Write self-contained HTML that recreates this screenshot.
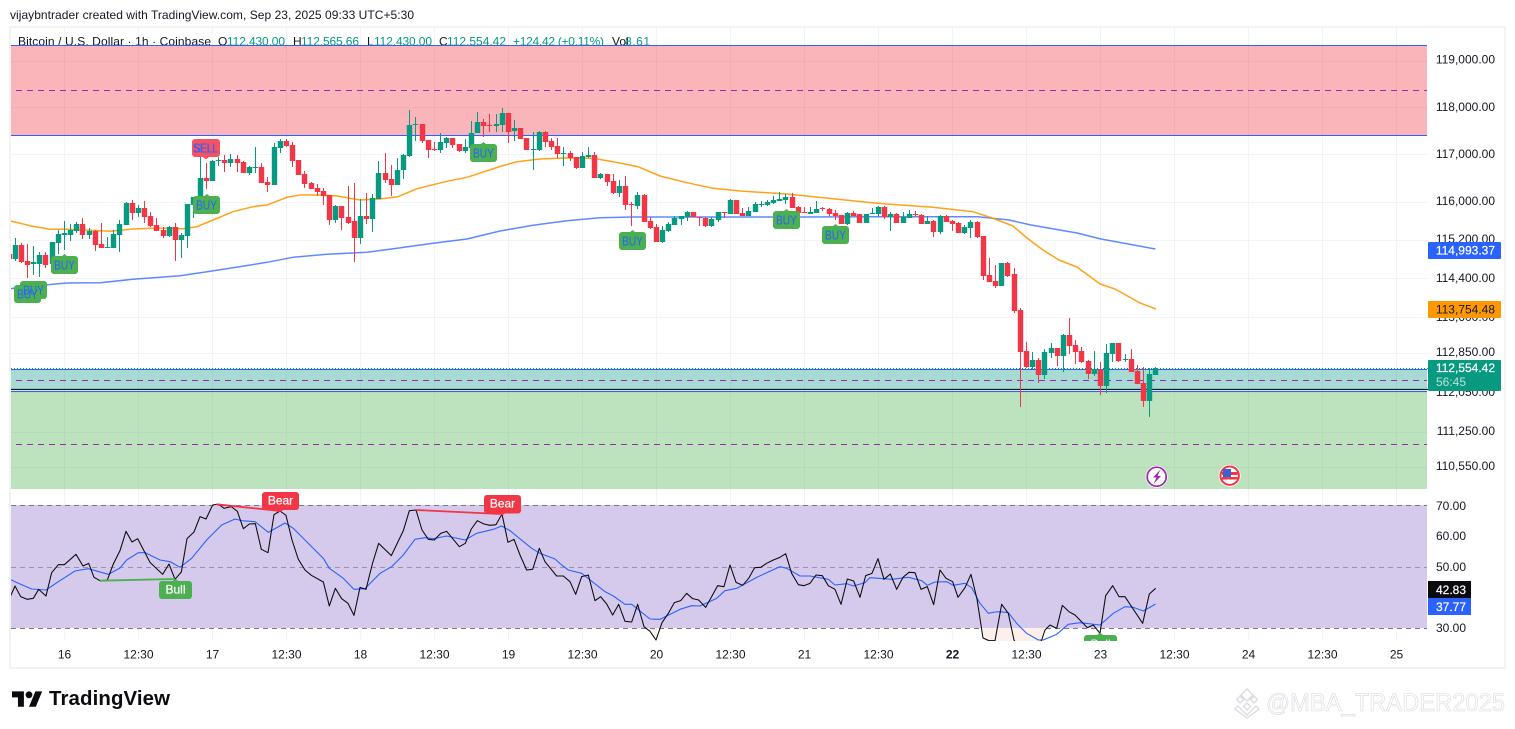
<!DOCTYPE html>
<html><head><meta charset="utf-8"><title>BTCUSD chart</title>
<style>
html,body{margin:0;padding:0;background:#fff;width:1515px;height:729px;overflow:hidden}
svg{display:block;font-family:"Liberation Sans",sans-serif;font-size:12px}
.ax text{fill:#131722}
</style></head><body>
<svg width="1515" height="729" viewBox="0 0 1515 729" xmlns="http://www.w3.org/2000/svg">
<defs>
<clipPath id="legend"><rect x="11" y="27" width="1416" height="18"/></clipPath>
<clipPath id="main"><rect x="11" y="27" width="1416" height="462"/></clipPath>
<clipPath id="rsi"><rect x="11" y="490" width="1416" height="151"/></clipPath>
</defs>
<text x="10" y="19" fill="#131722" textLength="404">vijaybntrader created with TradingView.com, Sep 23, 2025 09:33 UTC+5:30</text>
<rect x="10" y="27" width="1495" height="641" fill="#fff" stroke="#f3f3f3" stroke-width="2"/>

<!-- grid -->
<path stroke="#f2f3f5" stroke-width="1" fill="none" d="M11 61.5H1427M11 107.5H1427M11 154.5H1427M11 202.5H1427M11 240.5H1427M11 278.5H1427M11 317.5H1427M11 353.5H1427M11 392.5H1427M11 432.5H1427M11 467.5H1427
M64.5 28V641M138.5 28V641M212.5 28V641M286.5 28V641M360.5 28V641M434.5 28V641M508.5 28V641M582.5 28V641M656.5 28V641M730.5 28V641M804.5 28V641M878.5 28V641M952.5 28V641M1026.5 28V641M1100.5 28V641M1174.5 28V641M1248.5 28V641M1322.5 28V641M1396.5 28V641"/>

<!-- legend -->
<g clip-path="url(#legend)" fill="#089981">
<text x="18" y="45.500" fill="#131722" textLength="193">Bitcoin / U.S. Dollar · 1h · Coinbase</text>
<text x="218" y="45.500" fill="#131722">O</text><text x="227" y="45.500" textLength="58">112,430.00</text>
<text x="293" y="45.500" fill="#131722">H</text><text x="301" y="45.500" textLength="58">112,565.66</text>
<text x="367" y="45.500" fill="#131722">L</text><text x="374" y="45.500" textLength="58">112,430.00</text>
<text x="439" y="45.500" fill="#131722">C</text><text x="447" y="45.500" textLength="59">112,554.42</text>
<text x="513" y="45.500" textLength="91">+124.42 (+0.11%)</text>
<text x="612" y="45.500" fill="#131722">Vol</text><text x="625" y="45.500" textLength="25">8.61</text>
</g>

<!-- zones -->
<rect x="11" y="45" width="1416" height="90" fill="#f23645" fill-opacity=".37"/>
<rect x="11" y="369" width="1416" height="21" fill="#089981" fill-opacity=".36"/>
<rect x="11" y="391" width="1416" height="98" fill="#4caf50" fill-opacity=".37"/>
<path stroke="#2962ff" stroke-width="1" fill="none" d="M11 45.5H1427M11 135.5H1427M11 391.5H1427M11 369.5H1427"/>
<path stroke="#089981" stroke-width="1" stroke-dasharray="1 2" fill="none" d="M11 368.5H1428"/>
<path stroke="#9c27b0" stroke-width="1" stroke-dasharray="6 5" fill="none" d="M16 90.5H1427M16 380.5H1427M16 444.5H1427"/>
<path stroke="#0a1a1a" stroke-width="1.2" fill="none" d="M11 389.5H1428"/>

<!-- moving averages -->
<g clip-path="url(#main)" fill="none" stroke-linejoin="round">
<polyline stroke="#2962ff" stroke-opacity=".75" stroke-width="1.500" points="10.7,288.7 33,286 67,283 100,282.7 133,279.3 180,275.7 207,271.7 233,267.7 267,262.3 293,257.3 327,254.3 367,252.3 397,248.3 433,243.3 467,239 500,231 533,225.3 567,220.7 600,217.7 633,217 667,217 733,217 800,217 867,216.7 933,216.7 978,216.7 1009,220 1031,225 1077,233 1101,239 1155.4,249"/>
<polyline stroke="#ff9800" stroke-opacity=".9" stroke-width="1.500" points="10.7,221 30,225.7 50,229.3 66.7,229.3 86.7,230 110,231.3 133,229 156.7,228 183,228.7 196.7,226.7 213,220 233,211.7 253,206.7 268,204.7 287,197.3 300,195 320,195 337,196 360,200 380,199 398,196.7 417,188.7 447,181.3 467,177.3 500,166.5 517,161.7 540,159 563,158 593,158.3 613,161.7 638,166.7 660,176 687,182.7 713,188.3 740,191 787,194 833,198.7 877,203.3 933,207.3 973,211.7 995,219 1013,226 1027,238 1043,250 1059,260 1077,267 1100,284 1115,289 1140,303 1156,309"/>
</g>

<!-- candles -->
<g clip-path="url(#main)" fill="none">
<path stroke="#089981" stroke-width="1" d="M15.5 238V261M33.5 246V275M39.5 252V277M52.5 242V265M58.5 230V254M64.5 221V250M70.5 224V241M76.5 222V233M89.5 228V239M107.5 237V248M113.5 230V248M119.5 220V252M126.5 202V225M138.5 205V217M169.5 226V237M181.5 233V258M187.5 204V248M193.5 197V218M200.5 157V197M212.5 160V181M218.5 157V166M230.5 154V167M249.5 166V175M255.5 147V173M274.5 143V185M280.5 139V153M335.5 205V223M360.5 199V244M372.5 194V232M378.5 161V199M397.5 158V185M403.5 154V179M409.5 110V157M415.5 117V141M440.5 133V153M446.5 137V148M465.5 139V153M471.5 121V148M477.5 112V133M496.5 114V132M502.5 108V132M514.5 120V141M533.5 132V170M539.5 131V151M563.5 147V166M582.5 152V168M588.5 147V158M600.5 173V179M619.5 180V197M637.5 192V209M662.5 226V243M668.5 222V232M674.5 216V225M681.5 216V225M687.5 211V221M711.5 217V227M718.5 212V222M730.5 199V214M748.5 207V216M755.5 202V212M761.5 201V207M767.5 200V206M773.5 196V204M779.5 192V201M785.5 194V204M810.5 207V214M816.5 201V213M847.5 212V225M866.5 214V223M872.5 208V214M878.5 206V216M890.5 212V231M903.5 212V223M909.5 210V218M927.5 216V224M940.5 215V234M964.5 225V234M970.5 220V238M1001.5 263V286M1032.5 352V369M1044.5 349V379M1051.5 343V358M1063.5 334V372M1094.5 351V376M1106.5 344V393M1112.5 343V362M1125.5 354V362M1149.5 368V417M1155.5 367V375"/>
<path stroke="#089981" stroke-width="5.400" d="M15.5 245V259M33.5 262V264M39.5 255V264M52.5 242V264M58.5 234V243M64.5 233V235M70.5 230V235M76.5 224V231M89.5 231V235M107.5 247V248M113.5 234V248M119.5 224V235M126.5 203V225M138.5 208V213M169.5 227V236M181.5 235V240M187.5 204V236M193.5 197V205M200.5 178V197M212.5 161V181M218.5 160V161M230.5 159V163M249.5 167V173M255.5 167V168M274.5 147V185M280.5 141V148M335.5 206V220M360.5 216V238M372.5 198V219M378.5 173V199M397.5 170V185M403.5 155V170M409.5 125V156M415.5 124V125M440.5 142V150M446.5 138V143M465.5 147V151M471.5 133V148M477.5 122V133M496.5 124V126M502.5 113V125M514.5 128V131M533.5 149V150M539.5 132V150M563.5 153V154M582.5 156V168M588.5 155V157M600.5 174V178M619.5 186V193M637.5 195V206M662.5 230V242M668.5 224V231M674.5 218V225M681.5 216V219M687.5 212V217M711.5 219V226M718.5 212V220M730.5 200V214M748.5 211V216M755.5 204V212M761.5 204V205M767.5 202V205M773.5 200V203M779.5 199V201M785.5 197V200M810.5 212V214M816.5 209V213M847.5 213V224M866.5 214V223M872.5 213V214M878.5 207V214M890.5 214V217M903.5 217V223M909.5 214V218M927.5 221V224M940.5 216V232M964.5 227V233M970.5 222V228M1001.5 263V286M1032.5 360V367M1044.5 352V375M1051.5 348V353M1063.5 335V356M1094.5 369V374M1106.5 353V386M1112.5 343V354M1125.5 359V360M1149.5 374V401M1155.5 368V375"/>
<path stroke="#f23645" stroke-width="1" d="M21.5 243V263M27.5 244V278M45.5 252V268M82.5 218V239M95.5 230V251M101.5 223V248M132.5 200V220M144.5 201V223M150.5 212V227M156.5 218V231M163.5 227V238M175.5 223V261M206.5 163V189M224.5 155V172M237.5 155V172M243.5 161V173M261.5 163V183M267.5 177V192M286.5 139V147M292.5 142V167M298.5 160V175M304.5 171V188M311.5 182V189M317.5 184V196M323.5 188V205M329.5 195V225M341.5 206V230M348.5 186V224M354.5 183V262M366.5 193V224M385.5 153V183M391.5 165V196M422.5 124V143M428.5 140V158M434.5 142V151M452.5 138V148M459.5 144V152M483.5 119V137M489.5 114V132M508.5 113V143M520.5 128V139M526.5 138V150M545.5 131V147M551.5 138V150M557.5 138V158M570.5 151V161M576.5 157V169M594.5 152V178M607.5 174V186M613.5 174V194M625.5 176V210M631.5 202V226M644.5 194V222M650.5 217V229M656.5 224V242M693.5 212V217M699.5 217V226M705.5 217V227M724.5 212V218M736.5 200V214M742.5 208V216M792.5 193V208M798.5 206V213M804.5 207V213M822.5 207V211M829.5 208V216M835.5 210V220M841.5 215V224M853.5 211V216M859.5 214V223M884.5 206V219M896.5 213V223M915.5 211V216M921.5 214V224M933.5 220V237M946.5 215V222M952.5 220V231M958.5 222V233M977.5 221V238M983.5 236V280M989.5 258V282M995.5 265V288M1007.5 262V277M1014.5 268V313M1020.5 308V407M1026.5 342V368M1038.5 358V383M1057.5 348V366M1069.5 318V354M1075.5 340V364M1081.5 347V363M1088.5 360V379M1100.5 362V395M1118.5 343V362M1131.5 349V372M1137.5 365V384M1143.5 367V407"/>
<path stroke="#f23645" stroke-width="5.400" d="M9.5 254V259M21.5 245V262M27.5 261V265M45.5 255V265M82.5 224V235M95.5 231V245M101.5 244V248M132.5 203V213M144.5 208V217M150.5 216V226M156.5 225V231M163.5 230V236M175.5 227V240M206.5 178V181M224.5 160V163M237.5 159V163M243.5 162V173M261.5 167V183M267.5 182V185M286.5 141V146M292.5 145V161M298.5 160V175M304.5 174V184M311.5 183V189M317.5 188V192M323.5 191V196M329.5 195V220M341.5 206V218M348.5 217V223M354.5 221V238M366.5 216V219M385.5 173V180M391.5 179V185M422.5 124V141M428.5 140V150M434.5 149V150M452.5 138V145M459.5 144V151M483.5 122V126M489.5 125V126M508.5 113V132M520.5 128V139M526.5 138V150M545.5 132V142M551.5 141V147M557.5 146V154M570.5 153V158M576.5 157V168M594.5 155V178M607.5 174V182M613.5 181V193M625.5 186V205M631.5 204V205M644.5 195V222M650.5 221V228M656.5 227V242M693.5 212V217M699.5 217V218M705.5 218V226M724.5 212V213M736.5 200V214M742.5 213V216M792.5 197V208M798.5 207V213M804.5 212V213M822.5 208V209M829.5 209V214M835.5 213V216M841.5 215V224M853.5 213V216M859.5 214V223M884.5 207V217M896.5 214V223M915.5 214V215M921.5 215V224M933.5 221V232M946.5 216V222M952.5 221V224M958.5 223V233M977.5 222V237M983.5 236V276M989.5 275V282M995.5 281V286M1007.5 263V276M1014.5 274V311M1020.5 310V352M1026.5 351V367M1038.5 360V375M1057.5 348V356M1069.5 335V346M1075.5 345V352M1081.5 351V362M1088.5 361V374M1100.5 370V386M1118.5 343V361M1131.5 359V372M1137.5 371V384M1143.5 383V401"/>
</g>

<!-- BUY / SELL labels -->
<g font-size="12.500" text-anchor="middle">
<g fill="#4caf50">
<rect x="14" y="285" width="27" height="18" rx="3"/>
<rect x="20" y="281" width="27" height="18" rx="3"/>
<rect x="51" y="256" width="27" height="18" rx="3"/>
<rect x="193" y="196" width="27" height="18" rx="3"/>
<rect x="470" y="144" width="27" height="18" rx="3"/>
<rect x="619" y="232" width="27" height="18" rx="3"/>
<rect x="773" y="211" width="27" height="18" rx="3"/>
<rect x="822" y="226" width="27" height="18" rx="3"/>
<path d="M204.500 196l2.500-2 2.500 2zM481 144l2.500-2 2.500 2zM784 211l2.500-2 2.500 2zM833 226l2.500-2 2.500 2zM630 232l2.500-2 2.500 2zM62 256l2.500-2 2.500 2z"/>
</g>
<rect x="192" y="139" width="28" height="18" rx="3" fill="#f7525f"/>
<path d="M203 157l3 2.500 3-2.500z" fill="#f7525f"/>
<g fill="#2962ff">
<text x="27.500" y="298.500" textLength="21" lengthAdjust="spacingAndGlyphs">BUY</text>
<text x="33.500" y="294.500" textLength="21" lengthAdjust="spacingAndGlyphs">BUY</text>
<text x="64.500" y="269.500" textLength="21" lengthAdjust="spacingAndGlyphs">BUY</text>
<text x="206.500" y="209.500" textLength="21" lengthAdjust="spacingAndGlyphs">BUY</text>
<text x="483.500" y="157.500" textLength="21" lengthAdjust="spacingAndGlyphs">BUY</text>
<text x="632.500" y="245.500" textLength="21" lengthAdjust="spacingAndGlyphs">BUY</text>
<text x="786.500" y="224.500" textLength="21" lengthAdjust="spacingAndGlyphs">BUY</text>
<text x="835.500" y="239.500" textLength="21" lengthAdjust="spacingAndGlyphs">BUY</text>
<text x="205.500" y="152.500" textLength="25" lengthAdjust="spacingAndGlyphs">SELL</text>
<text x="206" y="152.500" textLength="24" lengthAdjust="spacingAndGlyphs">SELL</text>
</g>
</g>

<!-- event icons -->
<circle cx="1156.700" cy="476.700" r="11" fill="#fff"/>
<circle cx="1156.700" cy="476.700" r="9.500" fill="#fff" stroke="#9c27b0" stroke-width="1.700"/>
<path d="M1160.500 469.500l-7.500 8h3.500l-3 6.500 7.500-8h-3.500z" fill="#9c27b0"/>
<circle cx="1229.700" cy="475.700" r="11" fill="#fff"/>
<circle cx="1229.700" cy="475.700" r="9.200" fill="#fff" stroke="#f23645" stroke-width="2"/>
<rect x="1222" y="472" width="15.500" height="3" fill="#f23645"/>
<rect x="1222" y="477" width="15.500" height="2.500" fill="#f23645"/>
<rect x="1223" y="469" width="8" height="8" fill="#3a62d8"/>

<!-- RSI -->
<rect x="11" y="505" width="1416" height="123" fill="#d5caec"/>
<path stroke="#787b86" stroke-width="1" stroke-dasharray="5 4" fill="none" d="M11 505.500H1427M11 628.500H1427"/>
<path stroke="#9b90ae" stroke-width="1" stroke-dasharray="5 4" fill="none" d="M11 567.500H1427"/>
<g clip-path="url(#rsi)">
<path fill="#fdf0ea" d="M983 628h34l3 13h-35zM1014 628h30l-3 13h-24zM652 629l6 0-2.500 8z"/>
<g transform="translate(0 490) scale(.33333)" fill="none" stroke-linejoin="round">
<polyline stroke="#2962ff" stroke-width="3.300" points="30,268 60,282 95,297 138,300 175,275 225,243 265,236 325,253 360,234 380,210 415,188 435,188 480,210 510,215 540,232 575,205 620,150 665,105 705,87 725,92 765,95 805,127 855,99 880,115 970,205 988,235 1030,265 1062,298 1095,296 1140,250 1175,230 1210,195 1245,148 1275,143 1300,146 1340,138 1395,150 1430,130 1480,118 1505,108 1530,122 1595,175 1620,190 1665,207 1685,225 1705,240 1745,250 1815,305 1840,318 1875,343 1895,343 1950,387 1980,388 2040,358 2075,347 2100,348 2150,325 2175,302 2210,295 2270,262 2340,230 2360,235 2400,258 2430,258 2485,268 2505,285 2540,281 2560,288 2595,278 2610,263 2675,268 2725,262 2765,272 2782,286 2805,276 2840,275 2860,286 2895,280 2915,293 2940,340 2965,370 2985,366 3000,365 3025,368 3050,400 3080,430 3115,450 3130,450 3170,433 3205,403 3240,398 3300,405 3340,370 3375,350 3400,352 3430,363 3467,342"/>
<polyline stroke="#0b0b0f" stroke-width="3.200" points="30,322 45,288 62,320 82,328 100,325 116,298 138,318 155,248 175,224 193,224 228,193 249,228 266,220 282,262 300,272 322,270 340,222 360,182 378,124 396,156 413,146 450,217 488,253 507,222 525,268 544,246 561,146 582,126 600,80 618,87 638,45 655,42 672,55 694,50 712,64 730,116 748,102 766,101 784,178 804,188 822,74 840,63 858,76 876,150 895,208 915,240 934,256 970,276 988,348 1006,295 1025,326 1044,340 1062,376 1080,292 1098,298 1117,222 1136,160 1174,197 1210,122 1228,62 1248,60 1266,120 1285,148 1303,150 1322,130 1340,124 1378,170 1396,160 1414,117 1432,92 1452,102 1470,106 1488,104 1506,72 1524,157 1542,148 1560,195 1580,240 1598,238 1618,175 1635,215 1670,258 1690,258 1710,275 1727,313 1745,260 1765,255 1785,332 1802,320 1820,342 1838,375 1856,343 1875,394 1895,396 1913,343 1932,410 1950,424 1968,450 1986,398 2005,370 2023,338 2042,332 2060,310 2078,326 2096,330 2117,352 2135,320 2153,287 2172,290 2190,225 2208,277 2228,286 2246,265 2264,233 2282,232 2300,220 2320,210 2338,203 2357,191 2375,250 2395,284 2412,287 2430,280 2448,255 2467,257 2485,287 2505,298 2523,343 2542,267 2561,273 2580,322 2597,257 2616,250 2634,206 2652,268 2671,252 2690,298 2709,262 2727,247 2745,248 2763,298 2782,290 2801,344 2820,240 2838,265 2858,275 2874,322 2895,293 2913,253 2931,327 2949,444 2967,452 2985,452 3005,343 3025,370 3042,450 3060,480 3110,480 3125,450 3135,420 3150,405 3170,415 3187,346 3207,365 3225,375 3262,413 3280,405 3300,430 3317,317 3338,287 3357,320 3375,320 3428,400 3448,312 3467,295"/>
<path stroke="#f23645" stroke-width="5.500" d="M650 43L840 63M1248 60L1500 72"/>
<path stroke="#4caf50" stroke-width="5.500" d="M300 272L525 267"/>
</g>
<rect x="1084" y="635" width="33" height="18" rx="3" fill="#4caf50"/>
<path d="M1097 635l3-2.500 3 2.500z" fill="#4caf50"/>
<text x="1100.500" y="648" font-size="12" text-anchor="middle" fill="#fff">Bull</text>
</g>
<g font-size="12" text-anchor="middle" fill="#fff">
<rect x="262" y="492" width="37" height="18" rx="3" fill="#f23645"/>
<path d="M277 510l3 2 3-2z" fill="#f23645"/>
<text x="280.500" y="504.500" stroke="#fff" stroke-width=".2">Bear</text>
<rect x="484" y="495" width="37" height="18.500" rx="3" fill="#f23645"/>
<path d="M499 513.500l3 2 3-2z" fill="#f23645"/>
<text x="502.500" y="507.500" stroke="#fff" stroke-width=".2">Bear</text>
<rect x="159" y="581" width="33" height="18" rx="3" fill="#4caf50"/>
<path d="M172.500 581l3-2 3 2z" fill="#4caf50"/>
<text x="175.500" y="593.500" stroke="#fff" stroke-width=".2">Bull</text>
</g>

<!-- price axis -->
<g class="ax" text-anchor="end">
<text x="1495" y="63.500">119,000.00</text>
<text x="1495" y="111">118,000.00</text>
<text x="1495" y="158">117,000.00</text>
<text x="1495" y="205">116,000.00</text>
<text x="1495" y="243">115,200.00</text>
<text x="1495" y="282">114,400.00</text>
<text x="1495" y="321">113,600.00</text>
<text x="1495" y="356">112,850.00</text>
<text x="1495" y="396">112,050.00</text>
<text x="1495" y="435">111,250.00</text>
<text x="1495" y="470">110,550.00</text>
<text x="1466" y="510">70.00</text>
<text x="1466" y="540">60.00</text>
<text x="1466" y="571">50.00</text>
<text x="1466" y="632">30.00</text>
</g>
<rect x="1428" y="242" width="73" height="17" rx="1" fill="#2962ff"/>
<text x="1495" y="254.500" fill="#fff" stroke="#fff" stroke-width=".2" text-anchor="end">114,993.37</text>
<rect x="1428" y="301" width="73" height="17" rx="1" fill="#ff9800"/>
<text x="1495" y="313.500" fill="#131722" text-anchor="end">113,754.48</text>
<rect x="1428" y="360" width="73" height="31" rx="1" fill="#089981"/>
<text x="1495" y="372" fill="#fff" stroke="#fff" stroke-width=".2" text-anchor="end">112,554.42</text>
<text x="1436" y="386" fill="#fff" fill-opacity=".72">56:45</text>
<rect x="1428" y="581" width="43" height="17" fill="#0b0b0f"/>
<text x="1466" y="594" fill="#fff" stroke="#fff" stroke-width=".2" text-anchor="end">42.83</text>
<rect x="1428" y="598" width="43" height="17" fill="#2962ff"/>
<text x="1466" y="611" fill="#fff" stroke="#fff" stroke-width=".2" text-anchor="end">37.77</text>

<!-- time axis -->
<g class="ax" text-anchor="middle">
<text x="64.500" y="658.500">16</text><text x="138.500" y="658.500">12:30</text>
<text x="212.500" y="658.500">17</text><text x="286.500" y="658.500">12:30</text>
<text x="360.500" y="658.500">18</text><text x="434.500" y="658.500">12:30</text>
<text x="508.500" y="658.500">19</text><text x="582.500" y="658.500">12:30</text>
<text x="656.500" y="658.500">20</text><text x="730.500" y="658.500">12:30</text>
<text x="804.500" y="658.500">21</text><text x="878.500" y="658.500">12:30</text>
<text x="952.500" y="658.500" font-weight="bold">22</text><text x="1026.500" y="658.500">12:30</text>
<text x="1100.500" y="658.500">23</text><text x="1174.500" y="658.500">12:30</text>
<text x="1248.500" y="658.500">24</text><text x="1322.500" y="658.500">12:30</text>
<text x="1396.500" y="658.500">25</text>
</g>

<!-- TradingView logo -->
<g transform="translate(12 688) scale(.85)" fill="#0b0b0f">
<path d="M14 22H7V11H0V4h14v18zM28 22h-8l7.500-18h8L28 22z"/><circle cx="20" cy="8" r="4"/>
</g>
<text x="49" y="705" font-size="20.400" font-weight="bold" fill="#0b0b0f" textLength="121">TradingView</text>

<!-- watermark -->
<g fill="#fff" stroke="#dcdde3" stroke-width="1.400">
<path d="M1247 689l6 6-6 6-6-6zM1240 696l3.500 3.500-3.500 3.500-3.500-3.500zM1254 696l3.500 3.500-3.500 3.500-3.500-3.500zM1247 703l3.500 3.500-3.500 3.500-3.500-3.500z"/>
<path d="M1238 706l9 9 9-9 3 3-12 9-12-9z"/>
</g>
<text x="1266" y="711" font-size="25" fill="#fff" stroke="#d6d7de" stroke-width=".6" textLength="239" lengthAdjust="spacingAndGlyphs">@MBA_TRADER2025</text>
</svg>
</body></html>
